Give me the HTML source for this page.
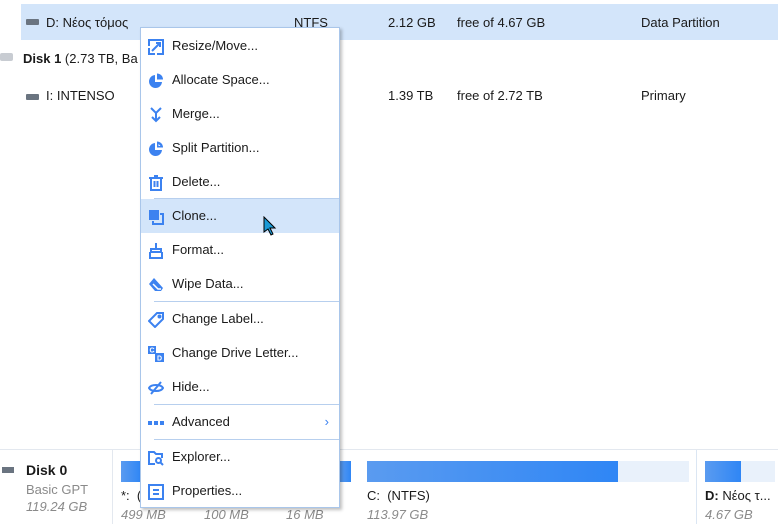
<!DOCTYPE html>
<html><head><meta charset="utf-8"><style>
*{margin:0;padding:0;box-sizing:border-box}
body{width:778px;height:524px;overflow:hidden;background:#fff;position:relative;font-family:"Liberation Sans","DejaVu Sans",sans-serif;font-size:13px;color:#1a1a1a}
.a{position:absolute;white-space:nowrap}
.g{color:#8a8a8a;font-style:italic}
.gr{color:#8a8a8a}
.drv{position:absolute;width:13px;height:6px;background:#6a7480;border-radius:1px}
.menu{position:absolute;left:140px;top:27px;width:200px;height:481px;background:#fff;border:1px solid #a9c6ea;box-shadow:2px 2px 3px rgba(0,0,0,.25)}
.it{position:absolute;left:0;width:198px;height:34px;line-height:34px;padding-left:31px}
.it svg{position:absolute;left:7px;top:10px}
.sep{position:absolute;left:13px;width:185px;height:1px;background:#b7cfee}
.bar{position:absolute;height:21px;background:#e9f1fb}
.fill{position:absolute;left:0;top:0;height:21px;background:linear-gradient(90deg,#5a9bf0,#2f86f5)}
</style></head><body>
<div class="a" style="left:21px;top:4px;width:757px;height:36px;background:#d3e5fa"></div>
<div class="drv" style="left:26px;top:19px"></div>
<div class="a" style="left:46px;top:15px">D: Νέος τόμος</div>
<div class="a" style="left:294px;top:15px">NTFS</div>
<div class="a" style="left:388px;top:15px">2.12 GB</div>
<div class="a" style="left:457px;top:15px">free of 4.67 GB</div>
<div class="a" style="left:641px;top:15px">Data Partition</div>
<div class="a" style="left:0;top:53px;width:13px;height:8px;background:#c8ccd2;border-radius:2px"></div>
<div class="a" style="left:23px;top:51px"><b>Disk 1</b> (2.73 TB, Ba</div>
<div class="drv" style="left:26px;top:94px"></div>
<div class="a" style="left:46px;top:88px">I: INTENSO</div>
<div class="a" style="left:388px;top:88px">1.39 TB</div>
<div class="a" style="left:457px;top:88px">free of 2.72 TB</div>
<div class="a" style="left:641px;top:88px">Primary</div>

<div class="a" style="left:0;top:449px;width:778px;height:1px;background:#e3e8ef"></div>
<div class="a" style="left:112px;top:450px;width:1px;height:74px;background:#e3e8ef"></div>
<div class="a" style="left:696px;top:450px;width:1px;height:74px;background:#dbe6f3"></div>
<div class="a" style="left:2px;top:467px;width:12px;height:6px;background:#6a7480"></div>
<div class="a" style="left:26px;top:462px;font-size:14px"><b style="font-weight:600">Disk 0</b></div>
<div class="a gr" style="left:26px;top:482px">Basic GPT</div>
<div class="a g" style="left:26px;top:499px">119.24 GB</div>
<div class="bar" style="left:121px;top:461px;width:20px"><div class="fill" style="width:20px"></div></div>
<div class="bar" style="left:340px;top:461px;width:11px"><div class="fill" style="width:11px"></div></div>
<div class="a" style="left:121px;top:488px">*:&nbsp; (</div>
<div class="a g" style="left:121px;top:507px">499 MB</div>
<div class="a g" style="left:204px;top:507px">100 MB</div>
<div class="a g" style="left:286px;top:507px">16 MB</div>
<div class="bar" style="left:367px;top:461px;width:322px"><div class="fill" style="width:251px"></div></div>
<div class="a" style="left:367px;top:488px">C:&nbsp; (NTFS)</div>
<div class="a g" style="left:367px;top:507px">113.97 GB</div>
<div class="bar" style="left:705px;top:461px;width:70px"><div class="fill" style="width:36px"></div></div>
<div class="a" style="left:705px;top:488px"><b style="font-weight:600">D:</b> Νέος τ...</div>
<div class="a g" style="left:705px;top:507px">4.67 GB</div>

<div class="menu">
<div class="it" style="top:1px"><svg width="16" height="16" viewBox="0 0 16 16" fill="none" stroke="#3c82f0" stroke-width="2"><path d="M1 7V1h14v14H9M1 9v6h6M4 12L12 4M8 4h4v4"/></svg>Resize/Move...</div>
<div class="it" style="top:35px"><svg width="16" height="16" viewBox="0 0 16 16"><path d="M7 2a6.5 6.5 0 1 0 7 7H7z" fill="#3c82f0"/><path d="M9 0.5a6 6 0 0 1 6 6H9z" fill="#3c82f0"/></svg>Allocate Space...</div>
<div class="it" style="top:69px"><svg width="16" height="16" viewBox="0 0 16 16" fill="none" stroke="#3c82f0" stroke-width="2"><path d="M3 1l5 5 5-5M8 6v7M4 10l4 4 4-4"/></svg>Merge...</div>
<div class="it" style="top:103px"><svg width="16" height="16" viewBox="0 0 16 16"><path d="M7 2a6.5 6.5 0 1 0 7 7H7z" fill="#3c82f0"/><path d="M9 0.5a6 6 0 0 1 6 6H9z" fill="#3c82f0"/><path d="M10.5 3v2h2z" fill="#fff"/></svg>Split Partition...</div>
<div class="it" style="top:137px"><svg width="16" height="16" viewBox="0 0 16 16" fill="none" stroke="#3c82f0" stroke-width="2"><path d="M1 3h14M6 1h4M3 3v12h10V3M6.5 6v6M9.5 6v6"/></svg>Delete...</div>
<div class="sep" style="top:170px"></div>
<div class="it" style="top:171px;background:#d3e5fa"><svg width="16" height="16" viewBox="0 0 16 16"><rect x="1" y="1" width="10" height="10" fill="#3c82f0"/><path d="M12 5h3v10H5v-3" fill="none" stroke="#3c82f0" stroke-width="2"/></svg>Clone...</div>
<div class="it" style="top:205px"><svg width="16" height="16" viewBox="0 0 16 16" fill="none" stroke="#3c82f0" stroke-width="2"><path d="M8 0v5M2 6h12M3 6v3h10V6M1 15h14M2 9v6M14 9v6"/></svg>Format...</div>
<div class="it" style="top:239px"><svg width="16" height="16" viewBox="0 0 16 16"><path d="M6 1L1 7l6 7h6l2-3z" fill="#3c82f0"/><path d="M5 7l5 5h3" fill="none" stroke="#fff" stroke-width="1.5"/></svg>Wipe Data...</div>
<div class="sep" style="top:273px"></div>
<div class="it" style="top:274px"><svg width="16" height="16" viewBox="0 0 16 16" fill="none" stroke="#3c82f0" stroke-width="2"><path d="M9 1h6v6l-8 8-6-6z"/><circle cx="11.5" cy="4.5" r="1" fill="#3c82f0"/></svg>Change Label...</div>
<div class="it" style="top:308px"><svg width="16" height="16" viewBox="0 0 16 16"><rect x="0" y="0" width="8" height="8" fill="#3c82f0"/><rect x="7" y="7" width="9" height="9" fill="#3c82f0"/><text x="1.5" y="6.5" font-size="7" fill="#fff" font-family="Liberation Sans" font-weight="bold">C</text><text x="9" y="14.5" font-size="7" fill="#fff" font-family="Liberation Sans" font-weight="bold">D</text></svg>Change Drive Letter...</div>
<div class="it" style="top:342px"><svg width="16" height="16" viewBox="0 0 16 16" fill="none" stroke="#3c82f0" stroke-width="2"><path d="M1 8c2-4 12-4 14 0-2 4-12 4-14 0z"/><path d="M13 2L3 14"/></svg>Hide...</div>
<div class="sep" style="top:376px"></div>
<div class="it" style="top:377px"><svg width="16" height="16" viewBox="0 0 16 16" fill="#3c82f0"><rect x="0" y="6" width="4" height="4"/><rect x="6" y="6" width="4" height="4"/><rect x="12" y="6" width="4" height="4"/></svg>Advanced<span style="position:absolute;right:10px;color:#3c82f0;font-size:13px">›</span></div>
<div class="sep" style="top:411px"></div>
<div class="it" style="top:412px"><svg width="16" height="16" viewBox="0 0 16 16" fill="none" stroke="#3c82f0" stroke-width="2"><path d="M7 14H1V2h5l2 2h6v4"/><circle cx="10.5" cy="10.5" r="2.5"/><path d="M12.5 12.5L15 15"/></svg>Explorer...</div>
<div class="it" style="top:446px"><svg width="16" height="16" viewBox="0 0 16 16" fill="none" stroke="#3c82f0" stroke-width="2"><rect x="1" y="1" width="14" height="14"/><path d="M5 6h6M5 10h6"/></svg>Properties...</div>
</div>
<svg class="a" style="left:263px;top:216px" width="14" height="20" viewBox="0 0 14 20"><path d="M1 1v15l4-3 3 6 2-1-3-6h5z" fill="#1a9ad6" stroke="#000" stroke-width="1"/></svg>
</body></html>
